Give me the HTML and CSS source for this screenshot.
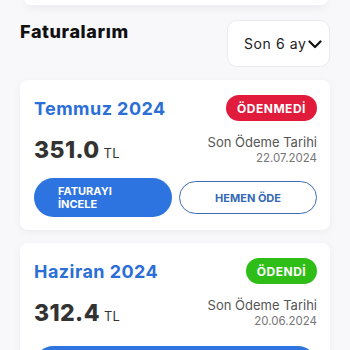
FILE: index.html
```html
<!DOCTYPE html>
<html lang="tr">
<head>
<meta charset="utf-8">
<link rel="stylesheet" href="styles.css">
</head>
<body>
<div class="prev-card"></div>
<div class="header">
  <h1 class="title">Faturalarım</h1>
  <div class="dropdown">
    <span>Son 6 ay</span>
    <svg class="chev" width="14" height="9" viewBox="0 0 14 9"><path d="M1.5 1.5 L7 7 L12.5 1.5" fill="none" stroke="#111" stroke-width="2.2" stroke-linecap="round" stroke-linejoin="round"/></svg>
  </div>
</div>

<div class="card">
  <div class="row top">
    <div class="month">Temmuz 2024</div>
    <div class="badge unpaid">ÖDENMEDİ</div>
  </div>
  <div class="row mid">
    <div class="amount">351.0<span class="cur">TL</span></div>
    <div class="due">
      <div class="due-label">Son Ödeme Tarihi</div>
      <div class="due-date">22.07.2024</div>
    </div>
  </div>
  <div class="actions">
    <button class="btn primary"><span class="btn-text">FATURAYI<br>İNCELE</span></button>
    <button class="btn outline">HEMEN ÖDE</button>
  </div>
</div>

<div class="card">
  <div class="row top">
    <div class="month">Haziran 2024</div>
    <div class="badge paid">ÖDENDİ</div>
  </div>
  <div class="row mid">
    <div class="amount">312.4<span class="cur">TL</span></div>
    <div class="due">
      <div class="due-label">Son Ödeme Tarihi</div>
      <div class="due-date">20.06.2024</div>
    </div>
  </div>
  <div class="actions low">
    <button class="btn primary wide">FATURAYI İNCELE</button>
  </div>
</div>
</body>
</html>
```

FILE: styles.css
```css
* { box-sizing: border-box; }
html, body { margin: 0; padding: 0; }
body {
  background: #f8f8fa;
  font-family: "Inter", "Open Sans", sans-serif;
  color: #333;
  width: 350px;
  height: 350px;
  overflow: hidden;
}
.prev-card {
  height: 5px;
  margin: 0 23px 0 25px;
  background: #fff;
  border-radius: 0 0 14px 14px;
  box-shadow: 0 3px 8px rgba(0,0,0,0.08);
}
.header {
  display: flex;
  justify-content: space-between;
  align-items: flex-start;
  padding: 0 20px 0 20px;
  margin-top: 15px;
}
.title {
  margin: 1px 0 0 0;
  font-size: 18px;
  font-weight: 800;
  letter-spacing: 0.6px;
  color: #111;
  line-height: 22px;
}
.dropdown {
  width: 103px;
  height: 47px;
  background: #fff;
  border: 1px solid #ebebef;
  border-radius: 10px;
  display: flex;
  align-items: center;
  padding-left: 16px;
  font-size: 14px;
  letter-spacing: 0.6px;
  color: #222;
  gap: 1px;
}
.chev { margin-top: 1px; }
.card {
  background: #fff;
  margin: 13px 20px 0 20px;
  border-radius: 8px;
  box-shadow: 0 2px 8px rgba(0,0,0,0.05);
  padding: 15px 13px 13px 14px;
}
.row {
  display: flex;
  justify-content: space-between;
  align-items: center;
}
.top { height: 26px; }
.month {
  color: #2b6fd6;
  font-size: 18px;
  font-weight: 700;
  letter-spacing: 0.45px;
}
.badge {
  height: 26px;
  border-radius: 13px;
  color: #fff;
  font-size: 12px;
  font-weight: 700;
  display: flex;
  align-items: center;
  justify-content: center;
  letter-spacing: 0.5px;
}
.unpaid { background: #e01b3c; width: 91px; }
.paid { background: #2fbd18; width: 71px; }
.mid { margin-top: 13px; align-items: flex-start; }
.amount {
  font-size: 23px;
  font-weight: 800;
  letter-spacing: 0.4px;
  color: #333;
  margin-top: 3px;
  line-height: 26px;
}
.cur {
  font-size: 13px;
  font-weight: 400;
  margin-left: 4px;
  letter-spacing: 0.3px;
}
.due { text-align: right; }
.due-label {
  font-size: 13px;
  color: #555;
  line-height: 17px;
}
.due-date {
  font-size: 11.5px;
  color: #777;
  line-height: 15px;
}
.actions {
  display: flex;
  gap: 7px;
  margin-top: 12px;
  align-items: center;
}
.actions.low { margin-top: 17px; }
.btn {
  font-family: inherit;
  font-weight: 700;
  font-size: 11px;
  border-radius: 20px;
  cursor: pointer;
}
.primary {
  width: 139px;
  height: 39px;
  background: #2d74e0;
  color: #fff;
  border: none;
  text-align: left;
  padding-left: 24px;
  line-height: 13px;
}
.btn-text { display: block; text-align: left; }
.outline {
  width: 139px;
  height: 33px;
  background: #fff;
  color: #3569b7;
  border: 1.5px solid #3a6cb5;
}
.wide { width: 284px; text-align: center; padding-left: 0; }
```
